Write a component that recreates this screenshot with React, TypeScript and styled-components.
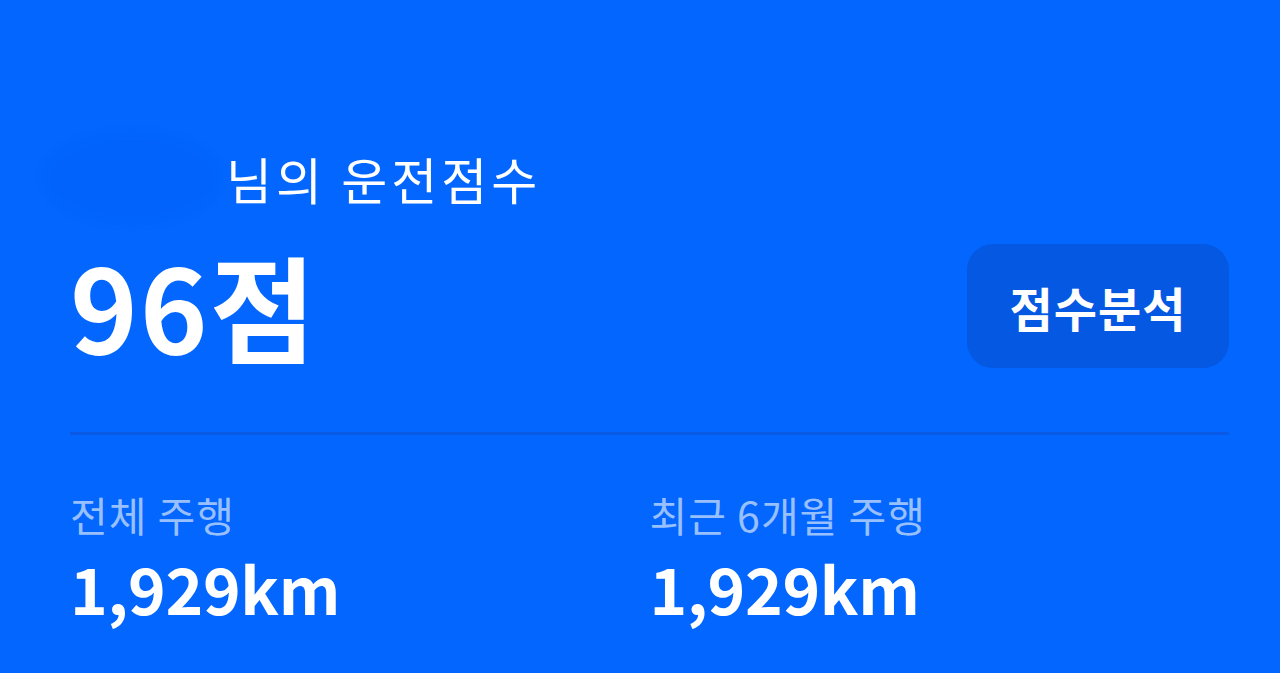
import React from 'react';
import styled, { createGlobalStyle } from 'styled-components';

const GlobalStyle = createGlobalStyle`
  html, body {
    margin: 0;
    padding: 0;
    background: #0266ff;
  }
  body {
    font-family: "Noto Sans CJK KR", "Noto Sans", sans-serif;
    -webkit-font-smoothing: antialiased;
  }
`;

const Card = styled.section`
  box-sizing: border-box;
  width: 1280px;
  height: 673px;
  background: #0266ff;
  padding: 134px 51px 0 70px;
  color: #ffffff;
  overflow: hidden;
`;

const Greeting = styled.div`
  display: flex;
  align-items: center;
  height: 88px;
`;

const NameMask = styled.span`
  display: inline-block;
  width: 180px;
  height: 92px;
  margin-left: -28px;
  border-radius: 50%;
  background: rgba(0, 50, 170, 0.05);
  filter: blur(4px);
`;

const GreetingText = styled.h2`
  margin: 0 0 0 4px;
  font-size: 50px;
  font-weight: 400;
  letter-spacing: 4px;
  line-height: 1;
`;

const ScoreRow = styled.div`
  display: flex;
  align-items: center;
  justify-content: space-between;
  margin-top: 22px;
`;

const Score = styled.div`
  font-size: 115px;
  font-weight: 700;
  letter-spacing: 2px;
  line-height: 1;
  margin-top: -4px;
`;

const AnalyzeButton = styled.button`
  width: 262px;
  height: 124px;
  border: none;
  border-radius: 26px;
  background: #0558e2;
  color: #ffffff;
  font-family: inherit;
  font-size: 47px;
  font-weight: 700;
  letter-spacing: 1px;
  padding: 0;
  cursor: pointer;
`;

const Divider = styled.hr`
  margin: 64px 0 0;
  border: none;
  height: 3px;
  background: #0a5ae6;
`;

const Stats = styled.div`
  display: grid;
  grid-template-columns: 1fr 1fr;
  margin-top: 55px;
`;

const Stat = styled.div`
  display: flex;
  flex-direction: column;
  gap: 13px;
`;

const StatLabel = styled.span`
  font-size: 41px;
  font-weight: 400;
  letter-spacing: 1px;
  color: rgba(255, 255, 255, 0.6);
  line-height: 1.2;
`;

const StatValue = styled.span`
  font-size: 64px;
  font-weight: 700;
  letter-spacing: -0.3px;
  line-height: 1.1;
`;

const stats = [
  { label: '전체 주행', value: '1,929km' },
  { label: '최근 6개월 주행', value: '1,929km' },
];

export default function App() {
  return (
    <>
      <GlobalStyle />
      <Card>
        <Greeting>
          <NameMask />
          <GreetingText>님의 운전점수</GreetingText>
        </Greeting>
        <ScoreRow>
          <Score>96점</Score>
          <AnalyzeButton>점수분석</AnalyzeButton>
        </ScoreRow>
        <Divider />
        <Stats>
          {stats.map((s) => (
            <Stat key={s.label}>
              <StatLabel>{s.label}</StatLabel>
              <StatValue>{s.value}</StatValue>
            </Stat>
          ))}
        </Stats>
      </Card>
    </>
  );
}
